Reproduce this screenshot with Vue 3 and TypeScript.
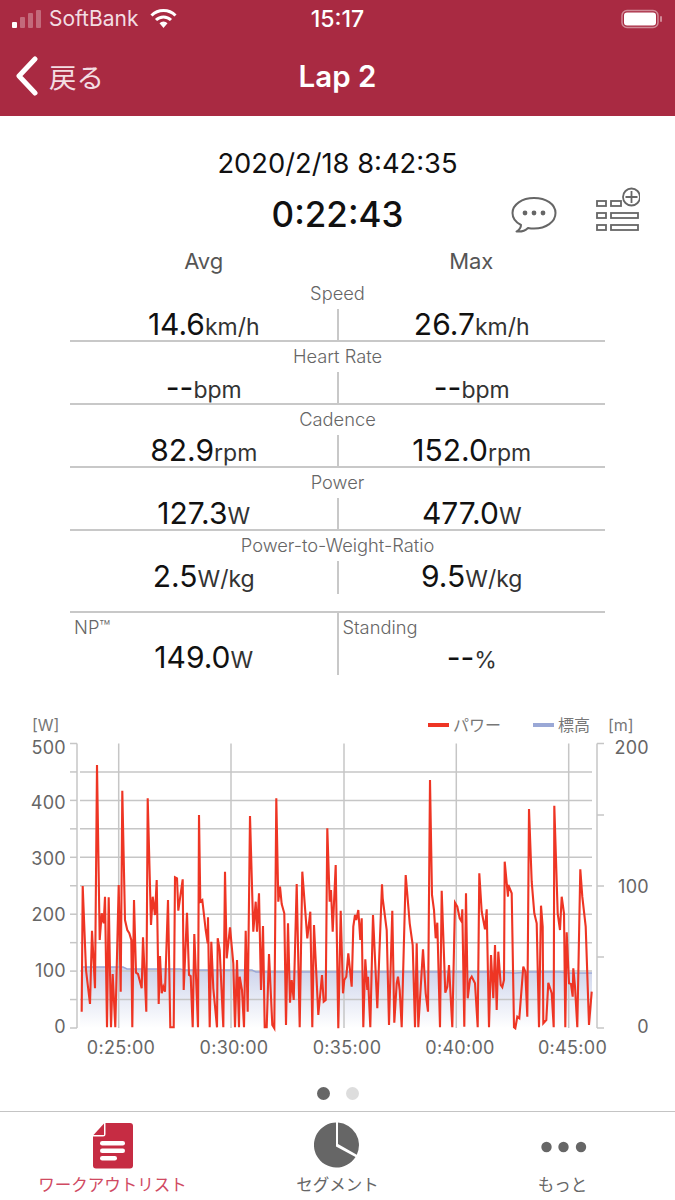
<script setup lang="ts">
interface Metric {
    label: string;
    avg: string;
    avgUnit: string;
    max: string;
    maxUnit: string;
}

const metrics: Metric[] = [
    { label: 'Speed', avg: '14.6', avgUnit: 'km/h', max: '26.7', maxUnit: 'km/h' },
    { label: 'Heart Rate', avg: '--', avgUnit: 'bpm', max: '--', maxUnit: 'bpm' },
    { label: 'Cadence', avg: '82.9', avgUnit: 'rpm', max: '152.0', maxUnit: 'rpm' },
    { label: 'Power', avg: '127.3', avgUnit: 'W', max: '477.0', maxUnit: 'W' },
    { label: 'Power-to-Weight-Ratio', avg: '2.5', avgUnit: 'W/kg', max: '9.5', maxUnit: 'W/kg' },
];

//-----------------------------------------------------------
// chart geometry, in page pixels
const left = 80;
const right = 592;
const top = 743.5;
const bottom = 1028;

const yFor = (w: number) => bottom - (w / 500) * (bottom - top);
const tickY = [0, 50, 100, 150, 200, 250, 300, 350, 400, 450, 500].map(yFor);
const gridY = tickY.slice(1, -1);
const gridX = [118.7, 231, 344, 456.3, 568.7];
const leftLabels = [
    { t: '500', y: 754 }, { t: '400', y: 809 }, { t: '300', y: 865 },
    { t: '200', y: 921 }, { t: '100', y: 977 }, { t: '0', y: 1033 },
];
const rightLabels = [{ t: '200', y: 754 }, { t: '100', y: 893 }, { t: '0', y: 1033 }];
const rightTicks = [743.5, 815, 886, 957, 1028];
const timeLabels = [
    { t: '0:25:00', x: 121 }, { t: '0:30:00', x: 234 }, { t: '0:35:00', x: 347 },
    { t: '0:40:00', x: 460 }, { t: '0:45:00', x: 572.5 },
];

// traced from the recording: x, y pairs at 3x, second half starts at x = 335
const powerA = [245,935,248,558,258,810,270,912,276,692,285,865,291,195,299,720,305,640,311,670,315,590,321,982,326,592,333,982,338,822,346,982,356,555,362,875,367,272,375,660,382,690,388,700,394,720,397,982,402,600,408,818,414,822,425,865,429,712,439,935,443,295,453,675,458,590,465,645,470,540,476,912,480,768,485,880,490,860,495,875,504,600,511,982,521,982,525,532,531,535,535,632,548,538,551,870,561,638,567,825,572,828,578,982,583,702,594,982,597,345,601,605,607,600,617,690,623,730,624,652,629,982,634,725,640,865,651,982,653,715,659,750,670,982,675,515,680,775,690,682,700,790,705,982,711,780,717,982,719,830,726,870,732,982,737,692,743,935,750,348,760,695,767,605,771,695,777,580,783,870,789,678,794,982,800,982,807,762,817,975,823,985,829,295,835,605,840,560,845,612,853,640,858,975,864,670,870,908,875,840,881,900,890,552,899,982,907,515,922,715,931,635,937,982,942,675,955,945,966,825,971,905,977,900,982,385,989,605,993,570,998,695,1007,495];
const powerB = [10,985,17,632,24,880,28,840,34,830,40,760,50,860,55,680,60,645,64,660,70,630,76,720,80,655,85,982,91,778,97,870,99,830,106,982,114,645,127,925,141,553,143,595,155,690,162,975,172,632,178,968,185,850,189,830,194,870,200,982,212,525,224,670,233,735,240,982,245,730,250,982,264,748,272,880,279,935,285,240,291,585,297,630,302,715,307,668,315,982,320,572,331,878,337,860,342,795,352,982,360,608,367,620,374,655,380,665,382,628,388,980,393,580,398,895,405,838,410,830,420,850,428,982,433,520,440,635,450,688,455,628,462,982,468,765,475,895,480,735,485,930,490,755,497,855,502,862,507,840,509,485,519,590,520,555,530,580,537,982,541,985,547,950,553,955,565,800,571,815,577,950,582,327,590,545,598,640,605,670,612,982,618,617,623,680,625,970,634,960,640,848,650,880,656,982,658,317,668,640,675,690,680,590,687,640,691,982,695,697,702,850,708,852,713,890,715,805,720,860,727,982,736,508,742,590,752,680,762,975,770,875];

const toPoints = (raw: number[], dx: number) => {
    const out: string[] = [];
    for (let i = 0; i < raw.length; i += 2) {
        out.push(`${(dx + raw[i] / 3).toFixed(1)},${(700 + raw[i + 1] / 3).toFixed(1)}`);
    }
    return out;
};

const powerLine = [...toPoints(powerA, 0), ...toPoints(powerB, 335)].join(' ');

const elevationRaw: [number, number][] = [
    [81, 967], [123, 967], [127, 969], [180, 969], [184, 970], [252, 970], [256, 972],
    [280, 972], [284, 972], [385, 972], [420, 972], [500, 972], [515, 973], [530, 972],
    [560, 972], [568, 973], [592, 973],
];
const elevationLine = elevationRaw.map((p) => p.join(',')).join(' ');
const elevationArea = `${left},${bottom} ${elevationLine} ${right},${bottom}`;
</script>

<template>
    <div class="page">
        <header class="header">
            <div class="status">
                <div class="status_left">
                    <svg class="signal" width="30" height="20" viewBox="0 0 30 20">
                        <rect x="0" y="13" width="5" height="6" rx="1" fill="#fff" />
                        <rect x="8" y="8" width="5" height="11" rx="1" fill="#fff" fill-opacity=".3" />
                        <rect x="16" y="4" width="5" height="15" rx="1" fill="#fff" fill-opacity=".3" />
                        <rect x="24" y="1" width="5" height="18" rx="1" fill="#fff" fill-opacity=".3" />
                    </svg>
                    <span class="carrier">SoftBank</span>
                    <svg class="wifi" width="27" height="20" viewBox="0 0 27 20">
                        <path d="M1.500 6.500a17 17 0 0 1 24 0" fill="none" stroke="#fff" stroke-width="3" />
                        <path d="M6 11a10.600 10.600 0 0 1 15 0" fill="none" stroke="#fff" stroke-width="3" />
                        <path d="M9.500 14.300a5.600 5.600 0 0 1 8 0L13.500 19z" fill="#fff" />
                    </svg>
                </div>
                <span class="clock">15:17</span>
                <svg class="battery" width="42" height="20" viewBox="0 0 42 20">
                    <rect x="1" y="1.500" width="36" height="17" rx="5" fill="none" stroke="#fff" stroke-opacity=".45" stroke-width="1.500" />
                    <rect x="3" y="3.500" width="32" height="13" rx="3" fill="#fff" />
                    <rect x="39" y="7" width="2" height="6" rx="1" fill="#fff" fill-opacity=".45" />
                </svg>
            </div>
            <nav class="nav">
                <div class="back">
                    <svg width="24" height="40" viewBox="0 0 24 40">
                        <path d="M20 3 4 20l16 17" fill="none" stroke="#fff" stroke-width="5" stroke-linecap="round" stroke-linejoin="round" />
                    </svg>
                    <span class="back_text">戻る</span>
                </div>
                <div class="nav_title">Lap 2</div>
                <div></div>
            </nav>
        </header>

        <main class="main">
            <p class="date">2020/2/18 8:42:35</p>
            <div class="duration_row">
                <p class="duration">0:22:43</p>
                <div class="tools">
                    <svg width="46" height="38" viewBox="0 0 46 38">
                        <path d="M23 2C11 2 1.500 8.500 1.500 17c0 5 3.500 9.500 8.500 12 0 2.500-2 5-4.500 6.500 5 .5 9-1 11.500-3.500 2 .4 4 .6 6 .6 12 0 21.500-6.600 21.500-15.600S35 2 23 2z" fill="none" stroke="#666" stroke-width="2" stroke-linejoin="round" />
                        <circle cx="14" cy="17" r="2.400" fill="#666" />
                        <circle cx="23" cy="17" r="2.400" fill="#666" />
                        <circle cx="32" cy="17" r="2.400" fill="#666" />
                    </svg>
                    <svg width="44" height="44" viewBox="0 0 44 44">
                        <g fill="none" stroke="#666" stroke-width="1.800">
                            <rect x="1" y="14" width="9" height="5" />
                            <rect x="15" y="14" width="10" height="5" />
                            <rect x="1" y="26" width="9" height="5" />
                            <rect x="15" y="26" width="27" height="5" />
                            <rect x="1" y="38" width="9" height="5" />
                            <rect x="15" y="38" width="27" height="5" />
                            <circle cx="35.500" cy="10" r="8.500" fill="#fff" />
                            <path d="M35.500 4v12M29.500 10h12" />
                        </g>
                    </svg>
                </div>
            </div>

            <div class="heads">
                <span>Avg</span>
                <span>Max</span>
            </div>

            <div class="table">
                <section v-for="m in metrics" :key="m.label" class="metric">
                    <p class="metric_label">{{ m.label }}</p>
                    <div class="metric_values">
                        <p class="value">{{ m.avg }}<span class="unit">{{ m.avgUnit }}</span></p>
                        <p class="value second">{{ m.max }}<span class="unit">{{ m.maxUnit }}</span></p>
                    </div>
                </section>
                <div class="extra">
                    <div class="extra_cell">
                        <p class="extra_label">NP™</p>
                        <p class="value">149.0<span class="unit">W</span></p>
                    </div>
                    <div class="extra_cell second">
                        <p class="extra_label">Standing</p>
                        <p class="value">--<span class="unit">%</span></p>
                    </div>
                </div>
            </div>

            <svg class="chart" width="675" height="375" viewBox="0 700 675 375">
                <defs>
                    <linearGradient id="elevationFill" x1="0" y1="0" x2="0" y2="1">
                        <stop offset="0" stop-color="#ccd3eb" />
                        <stop offset="1" stop-color="#ffffff" />
                    </linearGradient>
                </defs>

                <polygon :points="elevationArea" fill="url(#elevationFill)" />

                <g stroke="#c6c6c6" stroke-width="1.500">
                    <line v-for="y in gridY" :key="'g' + y" :x1="left" :x2="right" :y1="y" :y2="y" />
                    <line v-for="x in gridX" :key="'v' + x" :x1="x" :x2="x" :y1="top" :y2="bottom" />
                    <line x1="77" x2="77" :y1="top" :y2="bottom" />
                    <line v-for="y in tickY" :key="'t' + y" x1="70" x2="77" :y1="y" :y2="y" />
                    <line x1="597" x2="597" :y1="top" :y2="bottom" />
                    <line v-for="y in rightTicks" :key="'r' + y" x1="597" x2="604" :y1="y" :y2="y" />
                </g>

                <polyline :points="elevationLine" fill="none" stroke="#9aa8d6" stroke-width="1.500" />
                <polyline :points="powerLine" fill="none" stroke="#ee3524" stroke-width="2.100" />

                <text v-for="l in leftLabels" :key="'l' + l.t" class="tick" x="66" :y="l.y" text-anchor="end">{{ l.t }}</text>
                <text v-for="l in rightLabels" :key="'r' + l.t" class="tick" x="649" :y="l.y" text-anchor="end">{{ l.t }}</text>
                <text v-for="l in timeLabels" :key="l.t" class="tick" :x="l.x" y="1054" text-anchor="middle">{{ l.t }}</text>

                <text class="legend" x="32" y="731">[W]</text>
                <rect x="428" y="723" width="21" height="4" fill="#ee3524" />
                <text class="legend" x="453" y="731">パワー</text>
                <rect x="533" y="723" width="21" height="4" fill="#9aa8d6" />
                <text class="legend" x="558" y="731">標高</text>
                <text class="legend" x="608" y="731">[m]</text>
            </svg>

            <div class="dots">
                <span class="dot on"></span>
                <span class="dot"></span>
            </div>
        </main>

        <footer class="tabs">
            <div class="tab active">
                <svg width="42" height="48" viewBox="0 0 42 48">
                    <path d="M13.500 1H38a3 3 0 0 1 3 3v39.500a3 3 0 0 1-3 3H4a3 3 0 0 1-3-3V14.500h10a2.500 2.500 0 0 0 2.500-2.500z" fill="#c62c43" />
                    <path d="M12 1.500V13H1.500z" fill="#c62c43" />
                    <rect x="8" y="19" width="25" height="4.500" rx="2.200" fill="#fff" />
                    <rect x="8" y="26.500" width="25" height="4.500" rx="2.200" fill="#fff" />
                    <rect x="8" y="34" width="17" height="4.500" rx="2.200" fill="#fff" />
                </svg>
                <span class="tab_label">ワークアウトリスト</span>
            </div>
            <div class="tab">
                <svg width="48" height="48" viewBox="0 0 48 48">
                    <path d="M22 24.500V.500A22.500 22.500 0 1 0 41.500 35z" fill="#666" />
                    <path d="M24 22V.600A22.500 22.500 0 0 1 42.800 32.700z" fill="#666" />
                </svg>
                <span class="tab_label">セグメント</span>
            </div>
            <div class="tab">
                <svg width="48" height="48" viewBox="0 0 48 48">
                    <circle cx="7.500" cy="25" r="5.200" fill="#666" />
                    <circle cx="24.500" cy="25" r="5.200" fill="#666" />
                    <circle cx="42" cy="25" r="5.200" fill="#666" />
                </svg>
                <span class="tab_label">もっと</span>
            </div>
        </footer>
    </div>
</template>

<style scoped>
    p {
        margin: 0;
    }

    .page {
        width: 675px;
        height: 1200px;
        overflow: hidden;
        background-color: #fff;
        font-family: Inter, "Noto Sans CJK JP", sans-serif;
        color: #111;
    }

    .header {
        height: 116px;
        background-color: #a92a42;
        color: #fff;
    }

    .status {
        position: relative;
        display: flex;
        align-items: center;
        justify-content: space-between;
        height: 37px;
        padding: 0 12px;
    }

    .status_left {
        display: flex;
        align-items: center;
    }

    .signal {
        margin-right: 7px;
    }

    .carrier {
        font-size: 21px;
        color: #f3dde2;
        margin-right: 12px;
    }

    .clock {
        position: absolute;
        left: 0;
        right: 0;
        text-align: center;
        font-size: 23px;
        font-weight: 500;
    }

    .nav {
        display: grid;
        grid-template-columns: 1fr auto 1fr;
        align-items: center;
        height: 77px;
        padding-left: 15px;
    }

    .back {
        display: flex;
        align-items: center;
        gap: 10px;
    }

    .back_text {
        font-size: 27.500px;
        color: #f3dde2;
    }

    .nav_title {
        font-size: 29.500px;
        font-weight: 600;
        margin-right: 15px;
    }

    .main {
        height: 995px;
        padding-top: 31px;
        box-sizing: border-box;
    }

    .date {
        text-align: center;
        font-size: 27.300px;
        line-height: 34px;
    }

    .duration_row {
        position: relative;
        margin-top: 11px;
    }

    .duration {
        text-align: center;
        font-size: 35px;
        font-weight: 500;
        line-height: 44px;
    }

    .tools {
        position: absolute;
        top: -5px;
        right: 35px;
        display: flex;
        align-items: flex-start;
        gap: 39px;
    }

    .tools svg:first-child {
        margin-top: 9px;
    }

    .heads {
        display: grid;
        grid-template-columns: 1fr 1fr;
        width: 535px;
        margin: 10px auto 0;
        text-align: center;
        font-size: 22px;
        line-height: 30px;
        color: #555;
    }

    .table {
        width: 535px;
        margin: 3px auto 0;
    }

    .metric {
        height: 63px;
    }

    .metric_label {
        height: 30px;
        line-height: 28px;
        text-align: center;
        font-size: 18.300px;
        font-weight: 300;
        color: #666;
    }

    .metric_values {
        display: grid;
        grid-template-columns: 1fr 1fr;
        height: 31px;
        border-bottom: 2px solid #c8c8c8;
    }

    .metric:last-of-type .metric_values {
        border-bottom-color: transparent;
    }

    .value {
        text-align: center;
        font-size: 30px;
        line-height: 30px;
        white-space: nowrap;
    }

    .unit {
        font-size: 23px;
        color: #333;
    }

    .second {
        border-left: 2px solid #c8c8c8;
        margin-left: -1px;
    }

    .extra {
        display: grid;
        grid-template-columns: 1fr 1fr;
        height: 62px;
        margin-top: 17px;
        border-top: 2px solid #c8c8c8;
    }

    .extra_cell {
        display: flex;
        flex-direction: column;
    }

    .extra_label {
        font-size: 18.300px;
        font-weight: 300;
        line-height: 29px;
        color: #666;
        padding-left: 4px;
    }

    .chart {
        display: block;
        margin-top: 25px;
    }

    .tick {
        font-size: 18px;
        fill: #666;
        letter-spacing: .3px;
    }

    .legend {
        font-size: 16px;
        fill: #777;
    }

    .dots {
        display: flex;
        justify-content: center;
        gap: 16px;
        margin-top: 12px;
    }

    .dot {
        width: 13px;
        height: 13px;
        border-radius: 50%;
        background-color: #ddd;
    }

    .on {
        background-color: #666;
    }

    .tabs {
        display: grid;
        grid-template-columns: 1fr 1fr 1fr;
        height: 89px;
        border-top: 1.500px solid #c4c4c4;
        box-sizing: border-box;
    }

    .tab {
        display: flex;
        flex-direction: column;
        align-items: center;
        padding-top: 10px;
        color: #666;
    }

    .tab_label {
        font-size: 16.500px;
        line-height: 22px;
        margin-top: 4px;
        white-space: nowrap;
    }

    .active {
        color: #d04a62;
    }
</style>
